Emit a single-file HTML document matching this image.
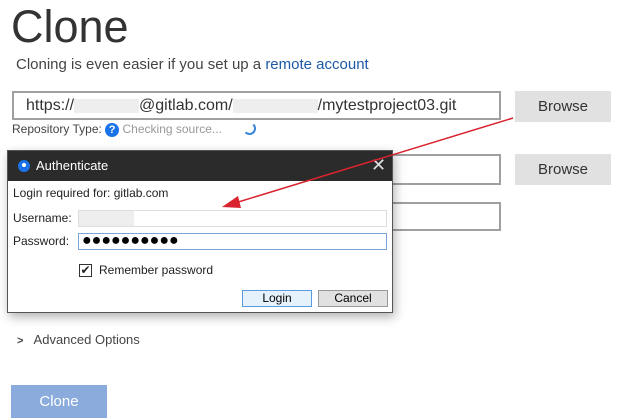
<!DOCTYPE html>
<html><head><style>
body{margin:0;width:623px;height:420px;background:#fff;font-family:"Liberation Sans",sans-serif;position:relative;overflow:hidden;color:#333}
div{position:absolute;box-sizing:border-box}
.inp{border:2px solid #a0a0a0;background:#fff}
.btn{background:#e1e1e1;font-size:15px;text-align:center;line-height:31px;color:#333}
</style></head><body>
<div style="left:11px;top:1px;font-size:45px;color:#333">Clone</div>
<div style="left:16px;top:56px;font-size:15px;color:#444">Cloning is even easier if you set up a <span style="color:#1e5aa8">remote account</span></div>
<div class="inp" style="left:12px;top:91px;width:489px;height:29px;font-size:16px;line-height:25px;padding-left:12px;color:#333">https://<span style="display:inline-block;width:65px;height:14px;background:#eee;vertical-align:middle"></span>@gitlab.com/<span style="display:inline-block;width:85px;height:14px;background:#eee;vertical-align:middle"></span>/mytestproject03.git</div>
<div class="btn" style="left:515px;top:91px;width:96px;height:31px">Browse</div>
<div style="left:12px;top:121px;font-size:12px;line-height:16px;color:#444">Repository Type: <span style="display:inline-block;width:14px;height:14px;border-radius:50%;background:#1a73e8;color:#fff;font-size:11px;text-align:center;line-height:14px;font-weight:bold;vertical-align:middle">?</span> <span style="color:#999">Checking source...</span></div>
<div style="left:243px;top:122px;width:13px;height:13px;border-radius:50%;border:2px solid transparent;border-right-color:#3a86d8;border-bottom-color:#3a86d8"></div>
<div class="inp" style="left:380px;top:154px;width:121px;height:31px"></div>
<div class="btn" style="left:515px;top:154px;width:96px;height:31px">Browse</div>
<div class="inp" style="left:380px;top:202px;width:121px;height:29px"></div>
<div style="left:7px;top:150px;width:386px;height:163px;border:1px solid #555;background:#fff;box-shadow:2px 4px 10px rgba(0,0,0,.3)">
 <div style="left:0;top:0;width:384px;height:30px;background:#2b2b2b;color:#fff;font-size:13px;line-height:30px;padding-left:28px">Authenticate</div>
 <div style="left:10px;top:9px;width:12px;height:12px;border-radius:50%;background:#1a73e8"></div>
 <div style="left:14px;top:12px;width:4px;height:4px;border-radius:50%;background:#fff"></div>
 <div style="left:363px;top:4px;color:#ddd;font-size:18px">✕</div>
 <div style="left:5px;top:35px;font-size:12px;color:#222">Login required for: gitlab.com</div>
 <div style="left:5px;top:60px;font-size:12px;color:#222">Username:</div>
 <div style="left:70px;top:59px;width:309px;height:17px;border:1px solid #ddd"><div style="left:0;top:0;width:55px;height:15px;background:#eee"></div></div>
 <div style="left:5px;top:83px;font-size:12px;color:#222">Password:</div>
 <div style="left:70px;top:82px;width:309px;height:17px;border:1px solid #7aa5d6;font-size:16px;line-height:14px;padding-left:3px;color:#000;letter-spacing:0">●●●●●●●●●●</div>
 <div style="left:71px;top:113px;width:13px;height:13px;border:1px solid #333;font-size:12px;line-height:11px;text-align:center;color:#222">✔</div>
 <div style="left:91px;top:112px;font-size:12px;color:#222">Remember password</div>
 <div style="left:234px;top:139px;width:70px;height:17px;border:1px solid #5a9ae0;background:#e5f1fb;font-size:12px;text-align:center;line-height:15px;color:#000">Login</div>
 <div style="left:310px;top:139px;width:70px;height:17px;border:1px solid #999;background:#e1e1e1;font-size:12px;text-align:center;line-height:15px;color:#000">Cancel</div>
</div>
<svg style="position:absolute;left:0;top:0" width="623" height="420"><line x1="513" y1="118" x2="235" y2="203" stroke="#d9232e" stroke-width="1.5"/><polygon points="222,207 238,196 241,208" fill="#d9232e"/></svg>
<div style="left:17px;top:332px;font-size:13px;color:#444"><b style="font-size:11px">&gt;</b>&nbsp;&nbsp; Advanced Options</div>
<div style="left:11px;top:385px;width:96px;height:33px;background:#8aabdc;color:#fff;font-size:15px;text-align:center;line-height:33px">Clone</div>
</body></html>
